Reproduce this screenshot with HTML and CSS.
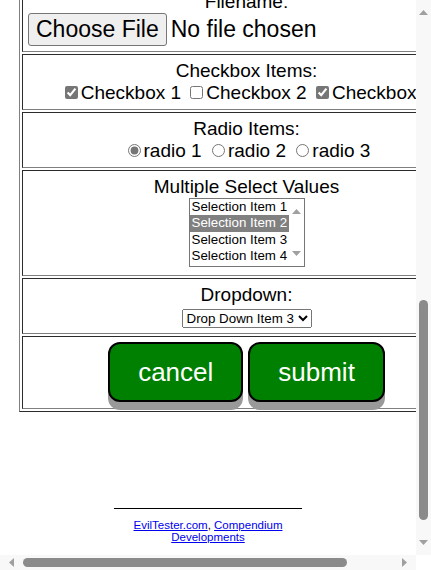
FILE: index.html
```html
<!DOCTYPE html>
<html lang="en">
<head>
<meta charset="utf-8">
<title>Basic HTML Form Example</title>
<link rel="stylesheet" href="styles.css">
</head>
<body>
<div class="window">
  <div class="frame">
    <div class="viewport">
      <div class="page">
        <form class="form">
          <table class="form-table">
            <tr>
              <td>
                <div class="label">Filename:</div>
                <label class="file"><input type="file" class="file-input" name="filename"><span class="file-btn">Choose File</span><span class="file-name">No file chosen</span></label>
              </td>
            </tr>
            <tr>
              <td>
                <div class="label">Checkbox Items:</div>
                <div class="line"><label><input type="checkbox" name="checkboxes[]" value="cb1" checked>Checkbox 1</label> <label><input type="checkbox" name="checkboxes[]" value="cb2">Checkbox 2</label> <label><input type="checkbox" name="checkboxes[]" value="cb3" checked>Checkbox 3</label></div>
              </td>
            </tr>
            <tr>
              <td>
                <div class="label">Radio Items:</div>
                <div class="line"><label><input type="radio" name="radioval" value="rd1" checked>radio 1</label> <label><input type="radio" name="radioval" value="rd2">radio 2</label> <label><input type="radio" name="radioval" value="rd3">radio 3</label></div>
              </td>
            </tr>
            <tr>
              <td>
                <div class="label">Multiple Select Values</div>
                <div class="listbox" role="listbox" aria-multiselectable="true">
                  <div class="options">
                    <div class="opt" role="option">Selection Item 1</div>
                    <div class="opt sel" role="option" aria-selected="true">Selection Item 2</div>
                    <div class="opt" role="option">Selection Item 3</div>
                    <div class="opt" role="option">Selection Item 4</div>
                  </div>
                  <div class="lb-bar">
                    <svg class="arr" width="9" height="5" viewBox="0 0 9 5"><path d="M0 5L4.5 0L9 5Z"/></svg>
                    <svg class="arr" width="9" height="5" viewBox="0 0 9 5"><path d="M0 0L9 0L4.5 5Z"/></svg>
                  </div>
                </div>
              </td>
            </tr>
            <tr>
              <td>
                <div class="label">Dropdown:</div>
                <div class="line">
                  <select class="dropdown" name="dropdown">
                    <option>Drop Down Item 1</option>
                    <option>Drop Down Item 2</option>
                    <option selected>Drop Down Item 3</option>
                    <option>Drop Down Item 4</option>
                    <option>Drop Down Item 5</option>
                    <option>Drop Down Item 6</option>
                  </select>
                </div>
              </td>
            </tr>
            <tr>
              <td class="actions">
                <div class="btn-row">
                  <button type="button" class="btn">cancel</button>
                  <button type="button" class="btn">submit</button>
                </div>
              </td>
            </tr>
          </table>
        </form>
        <div class="footer">
          <p><a href="#">EvilTester.com</a>, <a href="#">Compendium Developments</a></p>
        </div>
      </div>
    </div>
    <div class="vscroll">
      <svg class="arr up" width="9" height="5" viewBox="0 0 9 5"><path d="M0 5L4.5 0L9 5Z"/></svg>
      <div class="vthumb"></div>
      <svg class="arr down" width="9" height="5" viewBox="0 0 9 5"><path d="M0 0L9 0L4.5 5Z"/></svg>
    </div>
  </div>
  <div class="hbar">
    <div class="hscroll">
      <svg class="arr left" width="5" height="9" viewBox="0 0 5 9"><path d="M5 0L0 4.5L5 9Z"/></svg>
      <div class="hthumb"></div>
      <svg class="arr right" width="5" height="9" viewBox="0 0 5 9"><path d="M0 0L5 4.5L0 9Z"/></svg>
    </div>
    <div class="corner"></div>
  </div>
</div>
</body>
</html>
```
FILE: styles.css
```css
html, body {
  margin: 0;
  padding: 0;
}

body {
  font-family: "Liberation Sans", Arial, sans-serif;
  background: #fff;
  color: #000;
}

.window {
  width: 431px;
  height: 570px;
  display: flex;
  flex-direction: column;
  overflow: hidden;
}

.frame {
  flex: 1;
  min-height: 0;
  display: flex;
}

.viewport {
  flex: 1;
  min-width: 0;
  overflow: hidden;
}

/* page scrolled down: the top of the form sits above the viewport */
.page {
  padding: 0 8px;
}

.form {
  margin: 0;
}

.form-table {
  margin: -18px 0 0 11px;
  border: 1px outset gray;
  border-spacing: 2px;
  font-size: 19px;
  line-height: 22px;
}

.form-table td {
  border: 1px inset gray;
  padding: 5px;
  text-align: center;
}

.form-table td.actions {
  padding-bottom: 6px;
}

.label {
  white-space: nowrap;
}

.line {
  white-space: nowrap;
}

input[type="checkbox"],
input[type="radio"] {
  accent-color: #767676;
}

/* file chooser */
.file {
  display: inline-block;
  width: 437px;
  text-align: left;
  font-size: 23px;
  line-height: 26px;
  white-space: nowrap;
}

.file-input {
  display: none;
}

.file-btn {
  display: inline-block;
  padding: 2px 7px 3px;
  margin-right: 4px;
  border: 1px solid #767676;
  border-radius: 3px;
  background: #efefef;
}

/* multiple select */
.listbox {
  width: 116px;
  height: 69px;
  box-sizing: border-box;
  margin: 0 auto 3px;
  border: 1px solid #767676;
  display: flex;
  text-align: left;
  font-size: 13.33px;
  background: #fff;
}

.options {
  width: 99px;
}

.opt {
  line-height: 15.33px;
  padding: 0 2px 1px;
  white-space: nowrap;
}

.opt.sel {
  background: #808080;
  color: #fff;
}

.lb-bar {
  flex: 1;
  display: flex;
  flex-direction: column;
  align-items: center;
  justify-content: space-between;
  padding: 10px 0 10px;
}

.arr {
  display: block;
  fill: #a0a0a0;
}

/* dropdown */
.dropdown {
  font-family: "Liberation Sans", Arial, sans-serif;
  font-size: 13.33px;
}

/* buttons */
.btn-row {
  display: flex;
  justify-content: center;
  gap: 5px;
}

.btn {
  font-family: "Liberation Sans", Arial, sans-serif;
  font-size: 26px;
  line-height: 30px;
  padding: 13px 28px;
  margin: 0;
  color: #fff;
  background: #008000;
  border: 2px solid #000;
  border-radius: 12px;
  box-shadow: 0 8px #999;
}

/* footer */
.footer {
  width: 188px;
  margin: 96px auto 0;
  border-top: 1px solid #000;
  text-align: center;
  font-size: 11.5px;
  line-height: 12px;
}

.footer p {
  margin: 10px 0 0;
}

.footer a {
  color: #0000ee;
}

/* window scrollbars */
.vscroll {
  width: 15px;
  background: #f8f8f8;
  display: flex;
  flex-direction: column;
  align-items: center;
}

.vscroll .up {
  margin-top: 10px;
}

.vthumb {
  width: 9px;
  height: 220px;
  margin-top: 285px;
  border-radius: 5px;
  background: #8b8b8b;
}

.vscroll .down {
  margin-top: auto;
  margin-bottom: 10px;
}

.hbar {
  height: 15px;
  display: flex;
}

.hscroll {
  flex: 1;
  background: #f8f8f8;
  display: flex;
  align-items: center;
}

.hscroll .left {
  margin-left: 9px;
}

.hthumb {
  width: 324px;
  height: 9px;
  margin-left: 9px;
  border-radius: 5px;
  background: #8b8b8b;
}

.hscroll .right {
  margin-left: auto;
  margin-right: 9px;
}

.corner {
  width: 15px;
  background: #fff;
}
```
